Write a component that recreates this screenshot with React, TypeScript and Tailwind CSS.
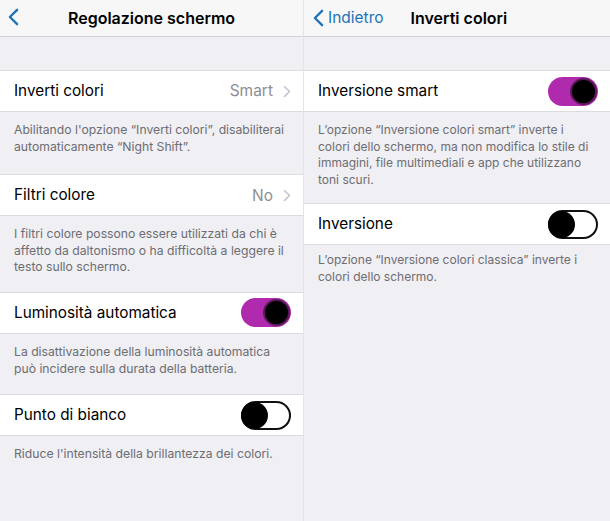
const font = { fontFamily: "Inter, 'Noto Sans', sans-serif" };

function Chevron({ className }: { className?: string }) {
  return (
    <svg viewBox="0 0 12 20" className={className} fill="none" stroke="currentColor" strokeWidth="2.6" strokeLinecap="round" strokeLinejoin="round">
      <path d="M10 2 L2 10 L10 18" />
    </svg>
  );
}

function RightChevron() {
  return (
    <svg viewBox="0 0 8 13" className="h-[13px] w-[8px] text-[#c4c4c9]" fill="none" stroke="currentColor" strokeWidth="1.6" strokeLinecap="round" strokeLinejoin="round">
      <path d="M1.5 1.5 L6.5 6.5 L1.5 11.5" />
    </svg>
  );
}

function Toggle({ on }: { on: boolean }) {
  if (on) {
    return (
      <div className="flex h-[29px] w-[50px] items-center justify-end rounded-full bg-[#b02aae] p-[1px]">
        <div className="h-[27px] w-[27px] rounded-full border-2 border-[#5a1a58] bg-black" />
      </div>
    );
  }
  return (
    <div className="flex h-[29px] w-[50px] items-center justify-start rounded-full border-2 border-[#111] bg-white">
      <div className="h-[27px] w-[27px] -ml-[2px] rounded-full bg-black" />
    </div>
  );
}

function Row({ label, value, toggle }: { label: string; value?: string; toggle?: boolean }) {
  return (
    <div className="flex h-[42px] items-center justify-between border-y border-[#dcdce0] bg-white pl-[14px] pr-[12px]">
      <span className="text-[15.3px] text-black">{label}</span>
      {toggle === undefined ? (
        <div className="flex items-center gap-[10px]">
          <span className="text-[15.5px] text-[#8e8e93]">{value}</span>
          <RightChevron />
        </div>
      ) : (
        <Toggle on={toggle} />
      )}
    </div>
  );
}

function Footer({ children, cls }: { children: React.ReactNode; cls: string }) {
  return (
    <p className={`pl-[14px] leading-[16.6px] text-[#6d6d72] ${cls}`}>{children}</p>
  );
}

export default function App() {
  return (
    <div style={font} className="grid h-[521px] w-[610px] grid-cols-[304px_306px] bg-[#efeff4]">
      {/* left screen */}
      <div className="border-r border-[#e4e4e8]">
        <div className="relative flex h-[37px] items-center justify-center border-b border-[#d3d3d6] bg-[#f7f7f7]">
          <Chevron className="absolute left-[8px] top-[8px] h-[18px] w-[11px] text-[#1e73b8]" />
          <span className="text-[16px] font-semibold text-black">Regolazione schermo</span>
        </div>
        <div className="h-[33px]" />
        <Row label="Inverti colori" value="Smart" />
        <Footer cls="pt-[10px] pr-[8px] pb-[19px] text-[12.2px]">Abilitando l'opzione “Inverti colori”, disabiliterai automaticamente “Night Shift”.</Footer>
        <Row label="Filtri colore" value="No" />
        <Footer cls="pt-[10px] pr-[8px] pb-[16px] text-[12.2px]">I filtri colore possono essere utilizzati da chi è affetto da daltonismo o ha difficoltà a leggere il testo sullo schermo.</Footer>
        <Row label="Luminosità automatica" toggle={true} />
        <Footer cls="pt-[10px] pr-[8px] pb-[17px] text-[12.2px]">La disattivazione della luminosità automatica può incidere sulla durata della batteria.</Footer>
        <Row label="Punto di bianco" toggle={false} />
        <Footer cls="pt-[10px] pr-[8px] pb-[10px] text-[12.2px]">Riduce l'intensità della brillantezza dei colori.</Footer>
      </div>

      {/* right screen */}
      <div className="bg-[#f0eff4]">
        <div className="relative flex h-[37px] items-center border-b border-[#d3d3d6] bg-[#f7f7f7]">
          <div className="flex items-center pl-[9px] text-[#1e73b8]">
            <Chevron className="h-[18px] w-[11px]" />
            <span className="ml-[4px] text-[15.5px]">Indietro</span>
          </div>
          <span className="ml-[27px] text-[16px] font-semibold text-black">Inverti colori</span>
        </div>
        <div className="h-[33px]" />
        <Row label="Inversione smart" toggle={true} />
        <Footer cls="pt-[10px] pr-[17px] pb-[15px] text-[12px]">L’opzione “Inversione colori smart” inverte i colori dello schermo, ma non modifica lo stile di immagini, file multimediali e app che utilizzano toni scuri.</Footer>
        <Row label="Inversione" toggle={false} />
        <Footer cls="pt-[7px] pr-[17px] pb-[10px] text-[12px]">L’opzione “Inversione colori classica” inverte i colori dello schermo.</Footer>
      </div>
    </div>
  );
}
